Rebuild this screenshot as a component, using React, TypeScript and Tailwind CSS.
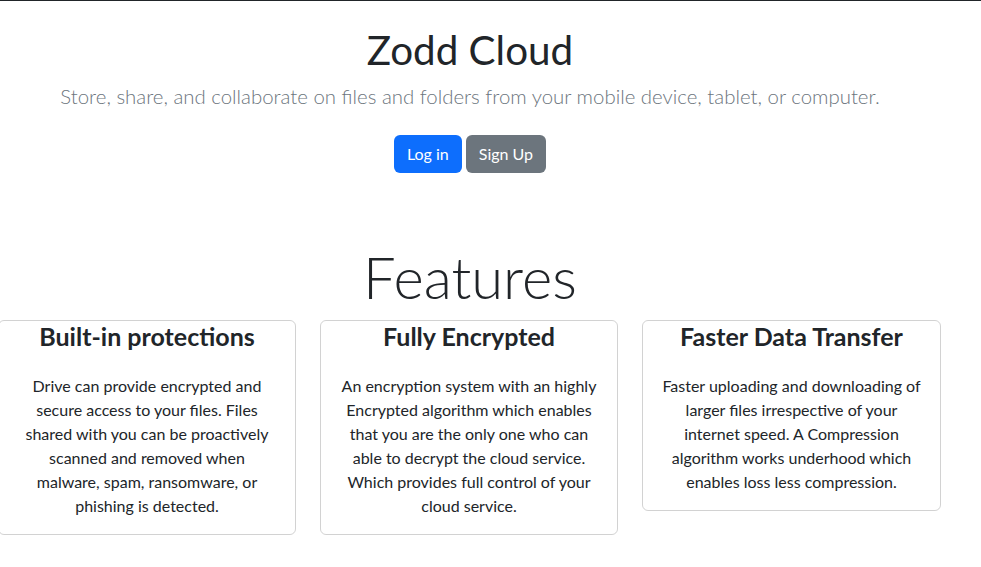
const features = [
  {
    title: "Built-in protections",
    lines: [
      "Drive can provide encrypted and",
      "secure access to your files. Files",
      "shared with you can be proactively",
      "scanned and removed when",
      "malware, spam, ransomware, or",
      "phishing is detected.",
    ],
  },
  {
    title: "Fully Encrypted",
    lines: [
      "An encryption system with an highly",
      "Encrypted algorithm which enables",
      "that you are the only one who can",
      "able to decrypt the cloud service.",
      "Which provides full control of your",
      "cloud service.",
    ],
  },
  {
    title: "Faster Data Transfer",
    lines: [
      "Faster uploading and downloading of",
      "larger files irrespective of your",
      "internet speed. A Compression",
      "algorithm works underhood which",
      "enables loss less compression.",
    ],
  },
];

export default function App() {
  return (
    <div className="min-h-screen bg-white border-t border-[#212529] text-[#212529] font-['Lato','Liberation_Sans',sans-serif]">
      <div className="-ml-[2px] w-[944px]">
        <section className="pt-[25px] text-center">
          <h1 className="text-[40.4px] leading-[48px] font-normal">Zodd Cloud</h1>
          <p className="mt-[7px] text-[20.4px] leading-[30px] font-light text-[#6c757d] whitespace-nowrap">
            Store, share, and collaborate on files and folders from your mobile device, tablet, or computer.
          </p>
          <div className="mt-[24px] flex justify-center gap-1">
            <button
              type="button"
              className="h-[38px] px-[13px] rounded-md bg-[#0d6efd] text-white text-base"
            >
              Log in
            </button>
            <button
              type="button"
              className="h-[38px] px-[13px] rounded-md bg-[#6c757d] text-white text-base"
            >
              Sign Up
            </button>
          </div>
        </section>

        <section className="mt-[70px]">
          <h2 className="text-center text-[58px] leading-[68px] font-light">Features</h2>
          <div className="mt-[9px] grid grid-cols-[298px_298px_299px] gap-6 items-start">
            {features.map(f => (
              <div
                key={f.title}
                className="border border-black/[.175] rounded-md px-4 pb-4 text-center"
              >
                <h3 className="text-[25px] leading-[30px] font-bold">{f.title}</h3>
                <p className="mt-[23px] text-base leading-6">
                  {f.lines.map(l => (
                    <span key={l} className="block whitespace-nowrap">
                      {l}
                    </span>
                  ))}
                </p>
              </div>
            ))}
          </div>
        </section>
      </div>
    </div>
  );
}
